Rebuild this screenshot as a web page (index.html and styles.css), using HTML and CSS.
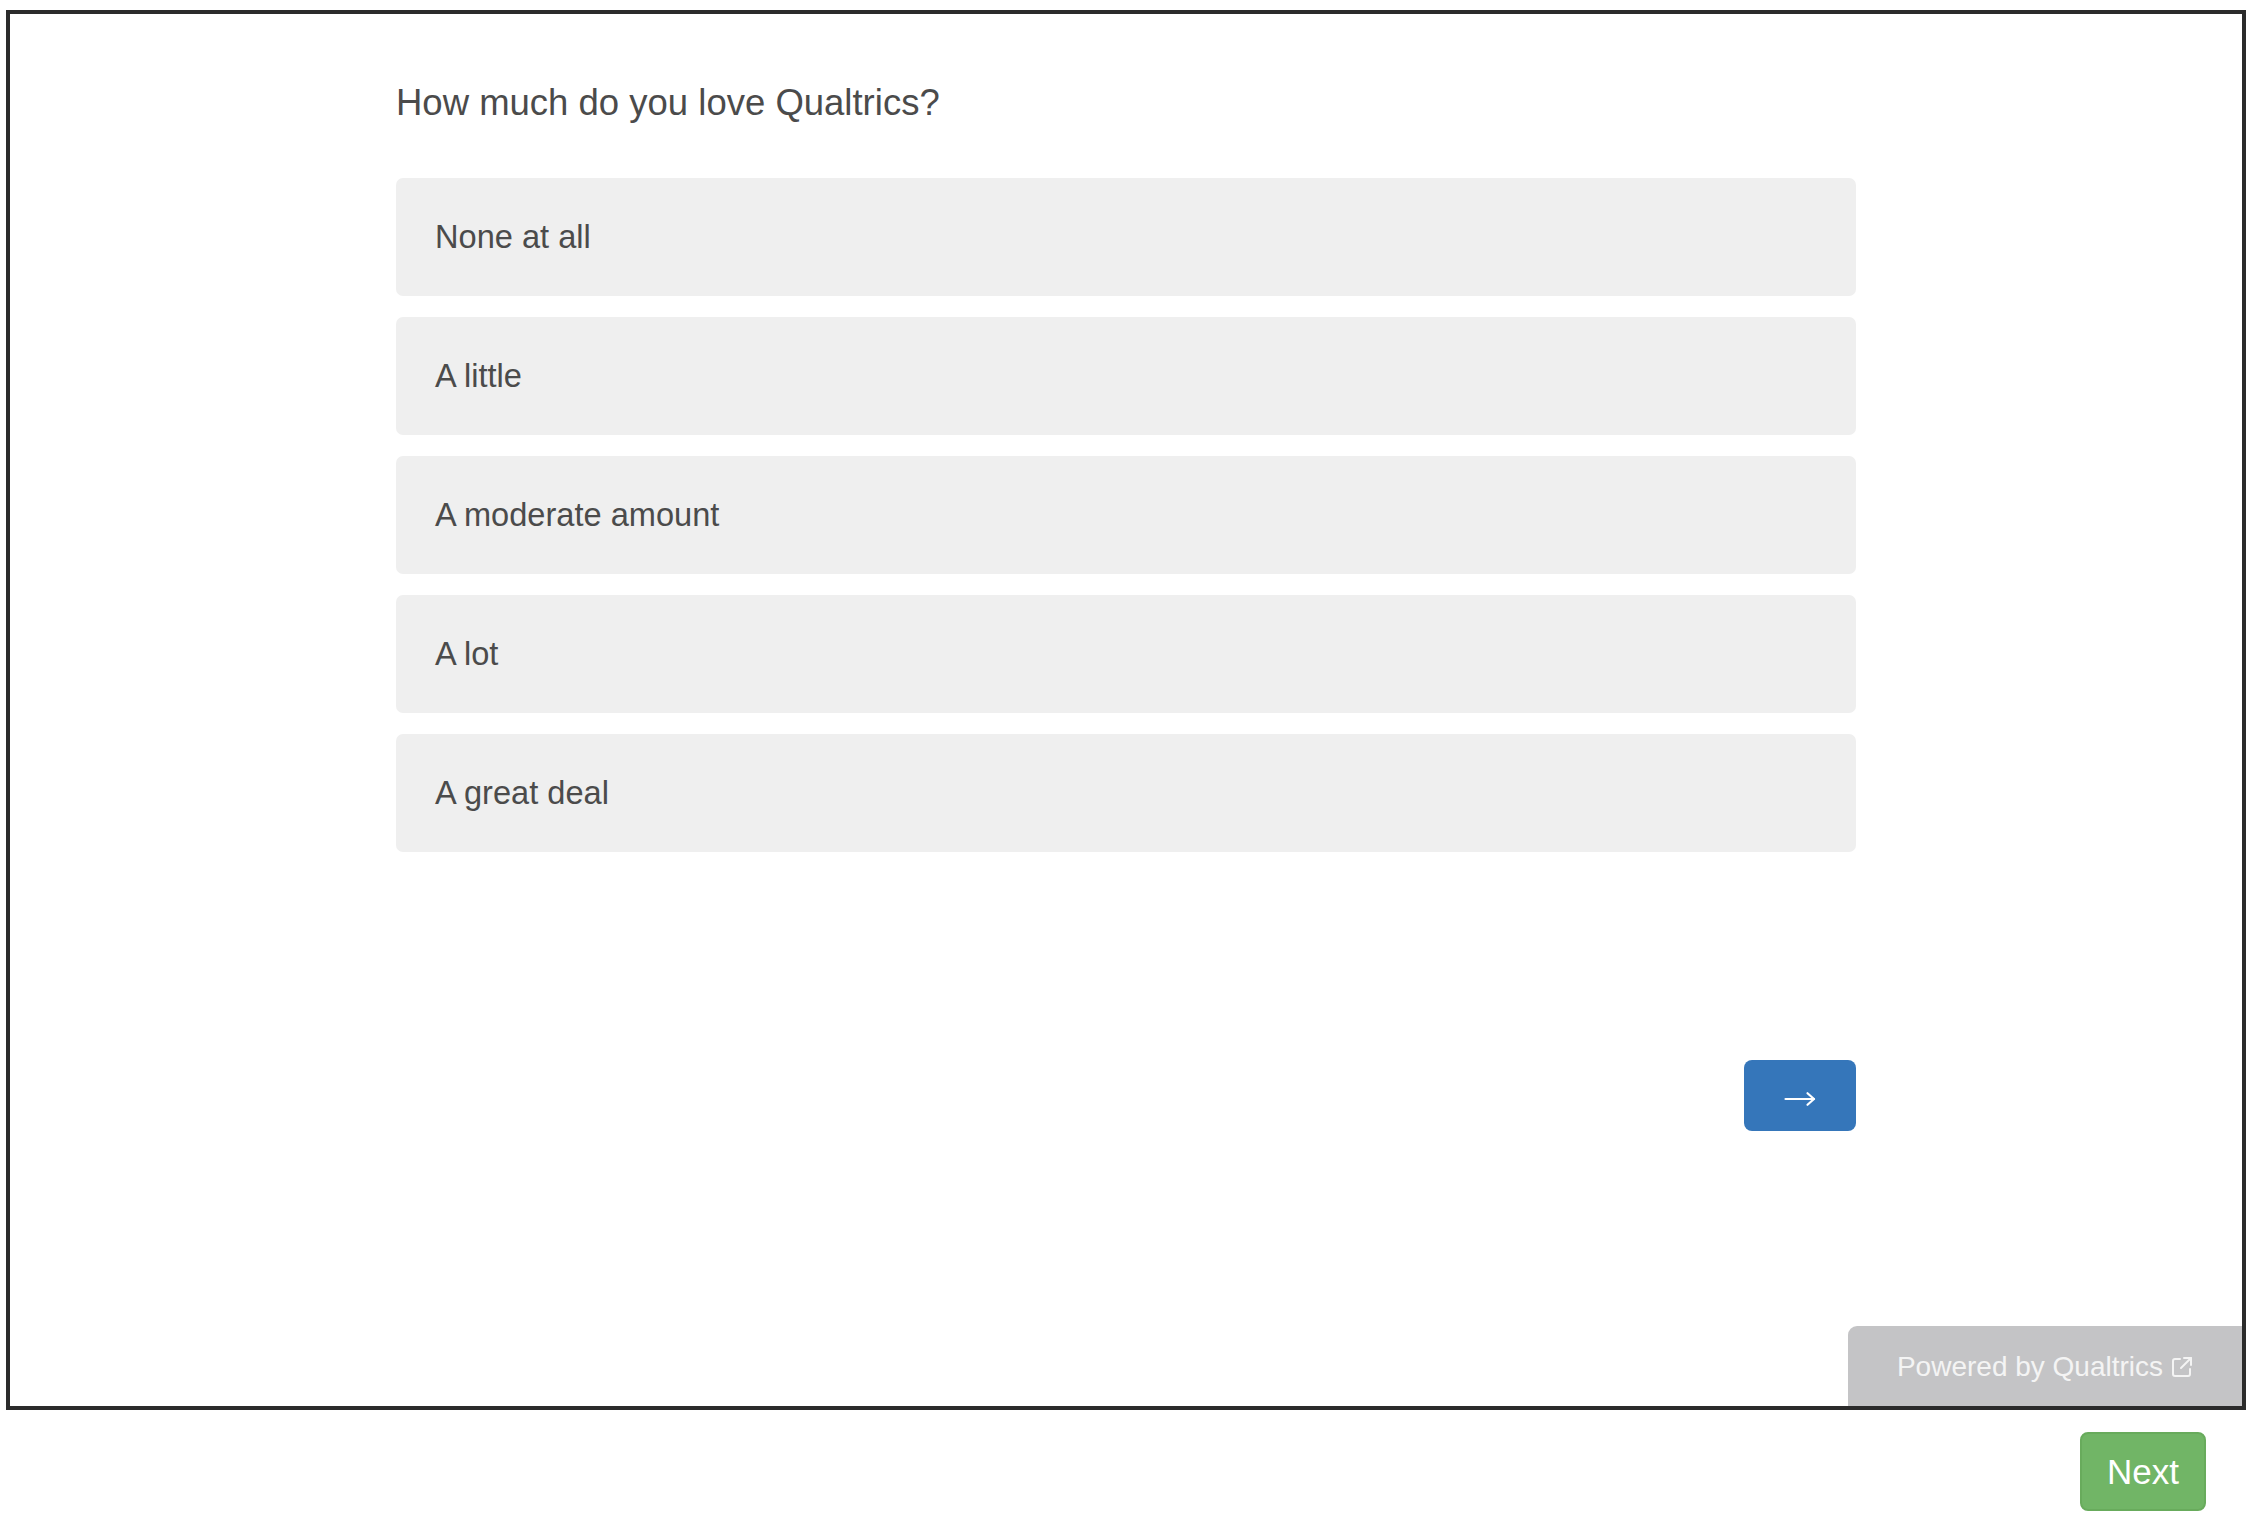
FILE: index.html
```html
<!DOCTYPE html>
<html lang="en">
<head>
<meta charset="utf-8">
<title>Survey</title>
<link rel="stylesheet" href="styles.css">
</head>
<body>
<div class="page">
  <div class="frame">
    <div class="survey">
      <div class="question">How much do you love Qualtrics?</div>
      <div class="choices">
        <div class="choice">None at all</div>
        <div class="choice">A little</div>
        <div class="choice">A moderate amount</div>
        <div class="choice">A lot</div>
        <div class="choice">A great deal</div>
      </div>
      <div class="nav">
        <button class="arrow-btn" type="button" aria-label="Next">
          <svg width="32" height="16" viewBox="0 0 32 16" fill="none" stroke="#ffffff" stroke-width="2.2" stroke-linecap="round" stroke-linejoin="round">
            <line x1="1.5" y1="8" x2="30" y2="8"/>
            <polyline points="23.5,2.2 30,8 23.5,13.8"/>
          </svg>
        </button>
      </div>
    </div>
    <a class="powered" href="#">Powered by Qualtrics
      <svg width="22" height="22" viewBox="0 0 22 22" fill="none" stroke="#f4f4f4" stroke-width="2" stroke-linecap="round" stroke-linejoin="round">
        <path d="M9 3H4a2 2 0 0 0-2 2v13a2 2 0 0 0 2 2h13a2 2 0 0 0 2-2v-5"/>
        <path d="M13 2h7v7"/>
        <path d="M20 2L10 12"/>
      </svg>
    </a>
  </div>
  <div class="footer">
    <button class="next" type="button">Next</button>
  </div>
</div>
</body>
</html>
```
FILE: styles.css
```css
body {
  margin: 0;
  background: #ffffff;
  font-family: "Liberation Sans", Arial, Helvetica, sans-serif;
}

.page {
  padding: 10px 0 0 6px;
  width: 2240px;
}

.frame {
  box-sizing: border-box;
  width: 2240px;
  height: 1400px;
  border: 4px solid #2b2b2b;
  display: flex;
  flex-direction: column;
  overflow: hidden;
}

.survey {
  width: 1460px;
  margin: 0 auto;
  padding-top: 67px;
}

.question {
  font-size: 36.5px;
  line-height: 44px;
  color: #4b4b4b;
}

.choices {
  margin-top: 53px;
  display: flex;
  flex-direction: column;
  gap: 21px;
}

.choice {
  height: 118px;
  background: #efefef;
  border-radius: 7px;
  padding-left: 39px;
  display: flex;
  align-items: center;
  font-size: 32.6px;
  color: #4b4b4b;
}

.nav {
  display: flex;
  justify-content: flex-end;
  margin-top: 208px;
}

.arrow-btn {
  width: 112px;
  height: 71px;
  background: #3576ba;
  border: 0;
  border-radius: 8px;
  padding: 6px 0 0 0;
  display: flex;
  align-items: center;
  justify-content: center;
  cursor: pointer;
}

.powered {
  margin-top: auto;
  align-self: flex-end;
  width: 394px;
  height: 80px;
  box-sizing: border-box;
  padding-top: 2px;
  background: #c4c4c6;
  border-top-left-radius: 9px;
  display: flex;
  align-items: center;
  justify-content: center;
  gap: 8px;
  color: #f4f4f4;
  font-size: 28px;
  text-decoration: none;
}

.footer {
  display: flex;
  justify-content: flex-end;
  padding: 22px 40px 0 0;
}

.next {
  width: 126px;
  height: 79px;
  box-sizing: border-box;
  background: #71b566;
  border: 2px solid #68ab5c;
  border-radius: 8px;
  color: #ffffff;
  font-family: "Liberation Sans", Arial, Helvetica, sans-serif;
  font-size: 35px;
  padding: 0;
  cursor: pointer;
}
```
